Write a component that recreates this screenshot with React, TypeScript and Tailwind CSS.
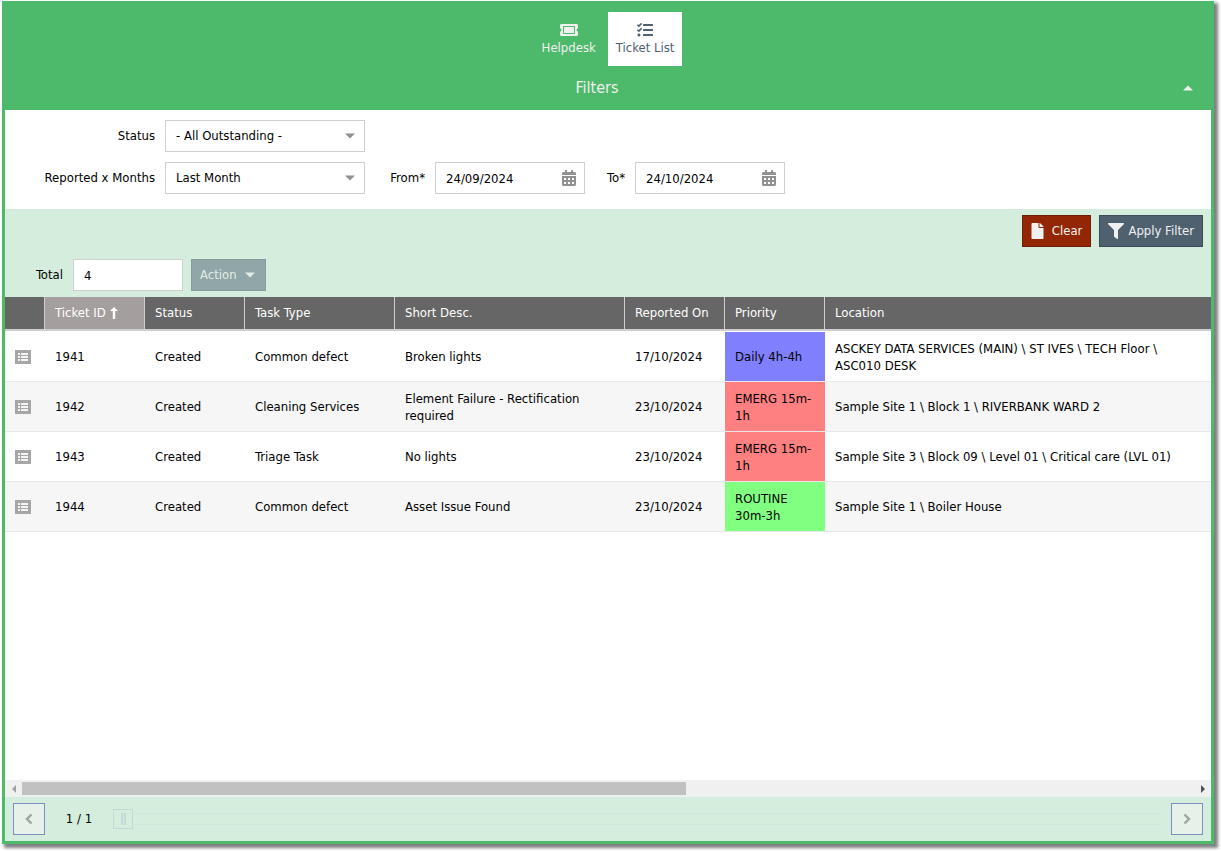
import { useState } from 'react'
import type { ReactNode } from 'react'
import { FaCalendarAlt, FaFile, FaFilter, FaTasks, FaTicketAlt } from 'react-icons/fa'

interface Ticket {
  id: string
  status: string
  taskType: string
  description: string
  reportedOn: string
  priority: string
  priorityClass: string
  location: string
}

const tickets: Ticket[] = [
  {
    id: '1941',
    status: 'Created',
    taskType: 'Common defect',
    description: 'Broken lights',
    reportedOn: '17/10/2024',
    priority: 'Daily 4h-4h',
    priorityClass: 'bg-[#8080ff]',
    location: 'ASCKEY DATA SERVICES (MAIN) \\ ST IVES \\ TECH Floor \\ ASC010 DESK',
  },
  {
    id: '1942',
    status: 'Created',
    taskType: 'Cleaning Services',
    description: 'Element Failure - Rectification required',
    reportedOn: '23/10/2024',
    priority: 'EMERG 15m-1h',
    priorityClass: 'bg-[#ff8080]',
    location: 'Sample Site 1 \\ Block 1 \\ RIVERBANK WARD 2',
  },
  {
    id: '1943',
    status: 'Created',
    taskType: 'Triage Task',
    description: 'No lights',
    reportedOn: '23/10/2024',
    priority: 'EMERG 15m-1h',
    priorityClass: 'bg-[#ff8080]',
    location: 'Sample Site 3 \\ Block 09 \\ Level 01 \\ Critical care (LVL 01)',
  },
  {
    id: '1944',
    status: 'Created',
    taskType: 'Common defect',
    description: 'Asset Issue Found',
    reportedOn: '23/10/2024',
    priority: 'ROUTINE 30m-3h',
    priorityClass: 'bg-[#80ff80]',
    location: 'Sample Site 1 \\ Boiler House',
  },
]

const headings = ['Status', 'Task Type', 'Short Desc.', 'Reported On', 'Priority', 'Location']

function Caret({ className }: { className: string }) {
  return (
    <svg viewBox="0 0 10 5" aria-hidden="true" className={className}>
      <path d="M0 0h10L5 5z" fill="currentColor" />
    </svg>
  )
}

function Chevron({ className = '' }: { className?: string }) {
  return (
    <svg viewBox="0 0 8 12" aria-hidden="true" className={`h-3 w-2 ${className}`}>
      <path d="M6.5 1.5L2 6l4.500 4.500" fill="none" stroke="currentColor" strokeWidth="2.4" />
    </svg>
  )
}

function ListIcon() {
  return (
    <svg viewBox="0 0 16 14" aria-hidden="true" shapeRendering="crispEdges" className="h-[14px] w-4">
      <rect width="16" height="14" rx="1" fill="currentColor" />
      <path d="M3 3h2v2H3zM6 3h7v2H6zM3 6h2v2H3zM6 6h7v2H6zM3 9h2v2H3zM6 9h7v2H6z" fill="#f4f4f4" />
    </svg>
  )
}

function SelectField({ id, options }: { id: string; options: string[] }) {
  return (
    <div className="relative">
      <select id={id} className="block h-8 w-full appearance-none border border-[#cfcfcf] bg-white px-[10px] text-black">
        {options.map((option) => (
          <option key={option}>{option}</option>
        ))}
      </select>
      <Caret className="pointer-events-none absolute top-[13px] right-[10px] h-[6px] w-[10px] text-[#919191]" />
    </div>
  )
}

function DateField({ id, value }: { id: string; value: string }) {
  return (
    <div className="relative w-[150px]">
      <input id={id} defaultValue={value} className="block h-8 w-full border border-[#cfcfcf] bg-white pr-8 pl-[10px]" />
      <button type="button" aria-label="Pick a date" className="absolute top-2 right-2 text-[#919191]">
        <FaCalendarAlt size={16} />
      </button>
    </div>
  )
}

function Cell({ children, className = 'px-[10px]' }: { children: ReactNode; className?: string }) {
  return (
    <td className={`h-[50px] border-b border-b-[#e8e8e8] py-0 leading-[17px] group-first/row:h-[51px] group-first/row:border-t group-first/row:border-t-white ${className}`}>
      {children}
    </td>
  )
}

export default function App() {
  const [page, setPage] = useState(1)

  return (
    <div className="flex min-h-screen bg-white pt-px pr-[7px] pb-[7px] pl-[2px] font-['DejaVu_Sans_Condensed','DejaVu_Sans',sans-serif] text-[13px] text-black">
      <div className="flex min-w-0 flex-1 flex-col border-x-3 border-b-3 border-[#4cb96b] shadow-[3px_3px_3px_1px_#808080]">
        <header className="bg-[#4cb96b] pt-[11px]">
          <nav className="flex justify-center gap-1">
            <button type="button" className="flex h-[54px] flex-col items-center px-2 pt-[10px] leading-[18px] text-[#f0f0f0]">
              <FaTicketAlt size={18} className="h-4" />
              <span className="pt-px">Helpdesk</span>
            </button>
            <button type="button" className="flex h-[54px] flex-col items-center bg-white px-2 pt-[10px] leading-[18px] text-[#4f606f]">
              <FaTasks size={16} />
              <span className="pt-px">Ticket List</span>
            </button>
          </nav>
          <div className="flex h-11 items-center pr-[18px] text-[#f0f0f0]">
            <h2 className="flex-1 pl-[6px] text-center text-base">Filters</h2>
            <button type="button" aria-label="Collapse filters">
              <Caret className="h-[6px] w-[10px] rotate-180" />
            </button>
          </div>
        </header>

        <form className="grid grid-cols-[160px_200px_70px_150px_50px_150px] items-center gap-y-[10px] pt-[10px] pb-[15px]">
          <label htmlFor="status" className="pr-[10px] text-right">Status</label>
          <SelectField id="status" options={['- All Outstanding -', 'Created', 'Closed']} />
          <label htmlFor="months" className="col-start-1 pr-[10px] text-right whitespace-nowrap">Reported x Months</label>
          <SelectField id="months" options={['Last Month', 'Last 3 Months']} />
          <label htmlFor="from" className="pr-[10px] text-right">From*</label>
          <DateField id="from" value="24/09/2024" />
          <label htmlFor="to" className="pr-[10px] text-right">To*</label>
          <DateField id="to" value="24/10/2024" />
        </form>

        <div className="flex h-11 items-center justify-end gap-2 bg-[#d5eddc] pr-2 text-[#f0f0f0]">
          <button type="button" className="flex h-8 items-center gap-2 border border-[#6e1f04] bg-[#932705] px-2">
            <FaFile size={16} className="w-[13px]" />
            Clear
          </button>
          <button type="button" className="flex h-8 items-center gap-1 border border-[#3b4a58] bg-[#4f606f] px-2">
            <FaFilter size={16} />
            Apply Filter
          </button>
        </div>
        <div className="flex h-11 items-center bg-[#d5eddc]">
          <label htmlFor="total" className="w-[68px] pr-[10px] text-right">Total</label>
          <input id="total" readOnly value={tickets.length} className="mr-2 h-8 w-[110px] border border-[#cfcfcf] bg-white px-[10px]" />
          <button type="button" disabled className="flex h-8 items-center gap-2 border border-[#869c9e] bg-[#91a6a8] pr-[10px] pl-2 text-[#e1ece5]">
            Action
            <Caret className="h-[6px] w-[10px]" />
          </button>
        </div>

        <div className="flex-1">
          <table className="w-full table-fixed border-separate border-spacing-0 text-left">
            <colgroup>
              <col className="w-10" />
              <col className="w-[100px]" />
              <col className="w-[100px]" />
              <col className="w-[150px]" />
              <col className="w-[230px]" />
              <col className="w-[100px]" />
              <col className="w-[100px]" />
              <col />
            </colgroup>
            <thead className="bg-[#666] text-white">
              <tr>
                <th aria-label="Details" className="h-[34px] border-r border-b-2 border-[#cfcfcf] p-0" />
                <th className="border-r border-b-2 border-[#cfcfcf] bg-[#a59e9e] px-[10px] py-0 font-medium">
                  <span className="flex items-center gap-1">
                    Ticket ID
                    <svg viewBox="0 0 8 12" aria-hidden="true" className="h-3 w-2">
                      <path d="M4 0l4 4H5.200v8H2.800V4H0z" fill="currentColor" />
                    </svg>
                  </span>
                </th>
                {headings.map((heading) => (
                  <th key={heading} className="border-r border-b-2 border-[#cfcfcf] px-[10px] py-0 font-medium whitespace-nowrap last:border-r-0">
                    {heading}
                  </th>
                ))}
              </tr>
            </thead>
            <tbody>
              {tickets.map((ticket) => (
                <tr key={ticket.id} className="group/row even:bg-[#f6f6f6]">
                  <Cell className="pl-[10px]">
                    <button type="button" aria-label={`Open ticket ${ticket.id}`} className="block text-[#a6a6a6]">
                      <ListIcon />
                    </button>
                  </Cell>
                  <Cell>{ticket.id}</Cell>
                  <Cell>{ticket.status}</Cell>
                  <Cell>{ticket.taskType}</Cell>
                  <Cell>{ticket.description}</Cell>
                  <Cell>{ticket.reportedOn}</Cell>
                  <Cell className={`px-[10px] ${ticket.priorityClass}`}>{ticket.priority}</Cell>
                  <Cell>{ticket.location}</Cell>
                </tr>
              ))}
            </tbody>
          </table>
        </div>

        {/* horizontal scroll bar */}
        <div className="flex h-[17px] items-center bg-[#f0f0f0]">
          <button type="button" aria-label="Scroll left" className="flex w-[17px] justify-center text-[#a0a0a0]">
            <Caret className="h-1 w-2 rotate-90" />
          </button>
          <div className="flex-1">
            <div className="h-[13px] w-17/30 bg-[#c1c1c1]" />
          </div>
          <button type="button" aria-label="Scroll right" className="flex w-[17px] justify-center text-[#505050]">
            <Caret className="h-1 w-2 -rotate-90" />
          </button>
        </div>

        <footer className="flex h-11 items-center bg-[#d5eddc] px-2">
          <button type="button" aria-label="Previous page" disabled className="flex size-8 items-center justify-center border border-[#7f8fc4] bg-[#e6f1e9] text-[#9da5a0]">
            <Chevron />
          </button>
          <span className="w-[68px] text-center">{page} / 1</span>
          <input
            type="range"
            aria-label="Page"
            min={1}
            max={1}
            value={page}
            onChange={(event) => setPage(Number(event.target.value))}
            disabled
            className="mr-2 h-3 min-w-0 flex-1 appearance-none border-y border-[#d0e8d9] bg-transparent [&::-webkit-slider-thumb]:size-5 [&::-webkit-slider-thumb]:appearance-none [&::-webkit-slider-thumb]:border [&::-webkit-slider-thumb]:border-[#c3d9d7] [&::-webkit-slider-thumb]:bg-[#d5eddc] [&::-webkit-slider-thumb]:bg-[linear-gradient(90deg,#c3d9d7_2px,transparent_2px,transparent_3px,#c3d9d7_3px)] [&::-webkit-slider-thumb]:bg-[length:5px_12px] [&::-webkit-slider-thumb]:bg-center [&::-webkit-slider-thumb]:bg-no-repeat"
          />
          <button type="button" aria-label="Next page" disabled className="flex size-8 items-center justify-center border border-[#7f8fc4] bg-[#e6f1e9] text-[#9da5a0]">
            <Chevron className="rotate-180" />
          </button>
        </footer>
      </div>
    </div>
  )
}
